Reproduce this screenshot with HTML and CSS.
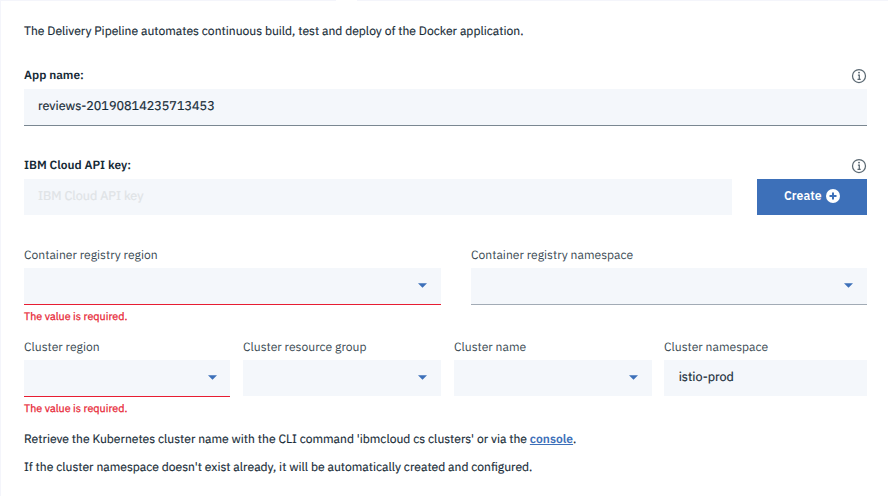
FILE: index.html
```html
<!DOCTYPE html>
<html lang="en">
<head>
<meta charset="utf-8">
<title>Delivery Pipeline</title>
<link rel="stylesheet" href="styles.css">
</head>
<body>
<main class="panel">
  <p class="intro">The Delivery Pipeline automates continuous build, test and deploy of the Docker application.</p>

  <section class="group">
    <div class="heading">
      <span class="title">App name:</span>
      <svg class="info" viewBox="0 0 16 16"><circle cx="8" cy="8" r="6.5"/><path d="M6.9 7h1.4v4.4M6.5 11.4h3.2"/><circle class="dot" cx="8" cy="4.6" r=".95"/></svg>
    </div>
    <div class="field lined"><span class="value">reviews-20190814235713453</span></div>
  </section>

  <section class="group group-key">
    <div class="heading">
      <span class="title">IBM Cloud API key:</span>
      <svg class="info" viewBox="0 0 16 16"><circle cx="8" cy="8" r="6.5"/><path d="M6.9 7h1.4v4.4M6.5 11.4h3.2"/><circle class="dot" cx="8" cy="4.6" r=".95"/></svg>
    </div>
    <div class="key-row">
      <div class="field"><span class="placeholder">IBM Cloud API key</span></div>
      <button class="create"><span>Create</span><svg viewBox="0 0 14 14"><circle cx="7" cy="7" r="7"/><path d="M7 3.5v7M3.5 7h7"/></svg></button>
    </div>
  </section>

  <section class="registry">
    <div>
      <label class="label">Container registry region</label>
      <div class="field select error"><svg class="caret" viewBox="0 0 10 5"><path d="M0 0h10L5 5z"/></svg></div>
      <p class="message">The value is required.</p>
    </div>
    <div>
      <label class="label">Container registry namespace</label>
      <div class="field select muted"><svg class="caret" viewBox="0 0 10 5"><path d="M0 0h10L5 5z"/></svg></div>
    </div>
  </section>

  <section class="cluster">
    <div>
      <label class="label">Cluster region</label>
      <div class="field select error"><svg class="caret" viewBox="0 0 10 5"><path d="M0 0h10L5 5z"/></svg></div>
      <p class="message">The value is required.</p>
    </div>
    <div>
      <label class="label">Cluster resource group</label>
      <div class="field select"><svg class="caret" viewBox="0 0 10 5"><path d="M0 0h10L5 5z"/></svg></div>
    </div>
    <div>
      <label class="label">Cluster name</label>
      <div class="field select"><svg class="caret" viewBox="0 0 10 5"><path d="M0 0h10L5 5z"/></svg></div>
    </div>
    <div>
      <label class="label">Cluster namespace</label>
      <div class="field"><span class="value">istio-prod</span></div>
    </div>
  </section>

  <p class="note">Retrieve the Kubernetes cluster name with the CLI command 'ibmcloud cs clusters' or via the <a href="#">console</a>.</p>
  <p class="note">If the cluster namespace doesn't exist already, it will be automatically created and configured.</p>
</main>
</body>
</html>
```
FILE: styles.css
```css
* { box-sizing: border-box; }
body {
  margin: 0;
  height: 496px;
  overflow: hidden;
  background: linear-gradient(#fff, #fff) 336px 0 / 21px 1px no-repeat, #f4f5fb;
  color: #152935;
  font: 12.1px/16px "IBM Plex Sans", Roboto, "Liberation Sans", sans-serif;
  text-rendering: geometricPrecision;
}
p { margin: 0; }
.panel { margin: 1px 0 0 1px; height: 495px; padding: 23px 21px 0 23px; background: #fff; }
.intro, .note { -webkit-text-stroke: .15px; }
.group { margin-top: 26px; }
.group-key { margin-top: 30px; }
.heading { display: flex; justify-content: space-between; height: 23px; padding-top: 2px; }
.title { font-weight: 600; font-size: 11.95px; }
.info { width: 16px; height: 16px; fill: none; stroke: #5a6872; stroke-width: 1.25; }
.info .dot { fill: #5a6872; stroke: none; }
.field { height: 36px; padding: 9px 14px; background: #f4f7fb; }
.field.lined { height: 37px; border-bottom: 1px solid #7a8791; }
.field.muted { height: 37px; border-bottom: 1px solid #a2abb5; }
.field.error { height: 37px; border-bottom: 1px solid #e71d32; }
.value, .placeholder { font-size: 12.6px; -webkit-text-stroke: .2px; }
.placeholder { color: #dfe3e6; }
.key-row { display: grid; grid-template-columns: 708px 110px; gap: 25px; }
.create {
  display: flex; align-items: center; justify-content: center; gap: 4.5px;
  height: 36px; padding: 0 0 2px; border: 0; background: #3d70b9; color: #fff;
  font: 600 12.2px/16px "IBM Plex Sans", Roboto, "Liberation Sans", sans-serif;
}
.create span { margin-bottom: 2px; }
.create svg { width: 14px; height: 14px; fill: #fff; }
.create path { stroke: #3d70b9; stroke-width: 2; }
.registry { display: grid; grid-template-columns: 417px 396px; gap: 30px; margin-top: 32px; }
.cluster { display: grid; grid-template-columns: 219px 211px 210px 203px; margin-top: 15px; }
.cluster > div { padding-right: 13px; }
.cluster > div:nth-child(3) { padding-right: 12px; }
.cluster > div:last-child { padding-right: 0; }
.cluster .error { padding-right: 13px; }
.cluster .value { padding-left: .7px; }
.label { display: block; height: 21px; padding-top: 1px; color: #3b4b54; }
.select { display: flex; justify-content: flex-end; padding: 15px 14px 0; }
.caret { width: 9px; height: 5px; fill: #3d70b9; }
.message { margin-top: 4px; height: 15px; color: #e71d32; font-size: 10.75px; line-height: 14px; -webkit-text-stroke: .25px; }
.note { margin-top: 16px; }
.note + .note { margin-top: 12px; }
.note a { color: #3d70b9; font-weight: 600; -webkit-text-stroke: 0; }
```
